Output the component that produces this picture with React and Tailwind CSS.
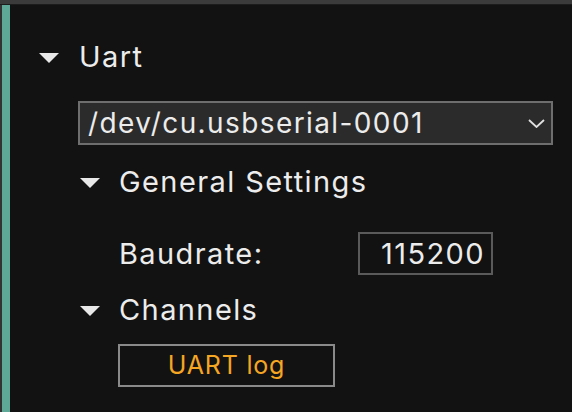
export default function App() {
  const Tri = () => (
    <svg width="20" height="10" viewBox="0 0 20 10" className="shrink-0 mt-[3px]">
      <polygon points="0,0 20,0 10,10" fill="#e8e8e8" />
    </svg>
  );

  return (
    <div
      className="w-[572px] h-[412px] bg-[#121212] flex flex-col overflow-hidden text-[#ececec]"
      style={{ fontFamily: "Inter, 'Noto Sans', sans-serif" }}
    >
      <div className="h-[4px] bg-[#3b3b3b] shrink-0" />
      <div className="h-[1px] bg-[#1c1c1c] shrink-0" />
      <div className="flex flex-1">
        <div className="w-[2px] bg-[#333]" />
        <div className="w-[8px] bg-[#5ea898]" />
        <div className="flex-1 flex flex-col pl-[29px] pt-[33px]">
          <div className="flex items-center gap-[20px] h-[36px]">
            <Tri />
            <span className="text-[29px] leading-none tracking-[1.4px]">Uart</span>
          </div>

          <div className="ml-[39px] mt-[27px] w-[475px] h-[44px] border-2 border-[#6e6e6e] bg-[#2b2b2b] flex items-center justify-between pl-[8px] pr-[6px]">
            <span className="text-[28px] leading-none tracking-[1.4px]">/dev/cu.usbserial-0001</span>
            <svg width="17" height="9" viewBox="0 0 17 9">
              <polyline points="1,1 8.5,8 16,1" fill="none" stroke="#e0e0e0" strokeWidth="1.8" />
            </svg>
          </div>

          <div className="ml-[41px] mt-[18px] flex items-center gap-[19px] h-[36px]">
            <Tri />
            <span className="text-[29px] leading-none tracking-[1.4px]">General Settings</span>
          </div>

          <div className="ml-[80px] mt-[33px] flex items-center h-[43px]">
            <span className="text-[29px] leading-none tracking-[1.4px] w-[239px]">Baudrate:</span>
            <div className="w-[135px] h-[43px] border-2 border-[#5a5a5a] flex items-center justify-end pr-[6px]">
              <span className="text-[29px] leading-none tracking-[1.4px]">115200</span>
            </div>
          </div>

          <div className="ml-[41px] mt-[16px] flex items-center gap-[19px] h-[36px]">
            <Tri />
            <span className="text-[29px] leading-none tracking-[1.4px]">Channels</span>
          </div>

          <div className="ml-[79px] mt-[17px] w-[217px] h-[43px] border-2 border-[#8a8a8a] flex items-center justify-center">
            <span className="text-[25px] leading-none tracking-[0.8px] text-[#f5a623]">UART log</span>
          </div>
        </div>
      </div>
    </div>
  );
}
